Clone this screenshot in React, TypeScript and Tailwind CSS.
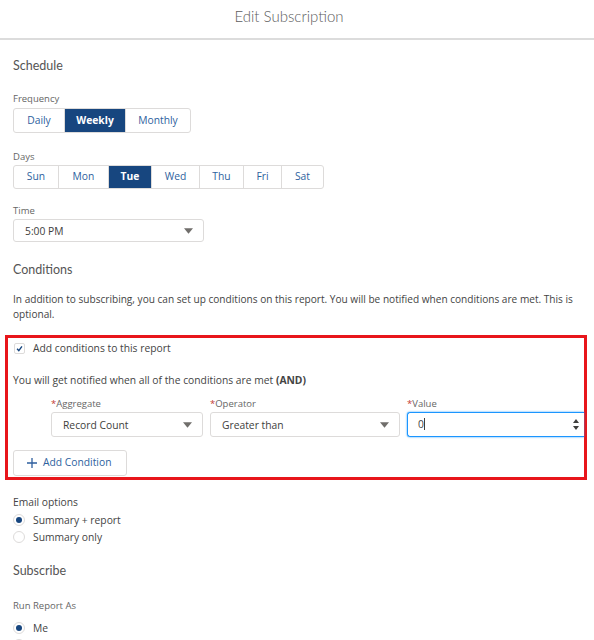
import { useState } from "react";

const frequencies = ["Daily", "Weekly", "Monthly"];
const freqWidths = ["w-[50px]", "w-[61px]", "w-[65px]"];
const days = ["Sun", "Mon", "Tue", "Wed", "Thu", "Fri", "Sat"];
const dayWidths = ["w-[44px]", "w-[50px]", "w-[43px]", "w-[48px]", "w-[44px]", "w-[38px]", "w-[42px]"];

function Caret() {
  return (
    <svg className="h-[6px] w-[9px] text-[#706e6b]" viewBox="0 0 10 6" fill="currentColor">
      <path d="M0 0h10L5 6z" />
    </svg>
  );
}

function Select({ value, className }: { value: string; className: string }) {
  return (
    <div
      className={`flex items-center justify-between rounded-[3px] border border-[#dddbda] bg-white pl-[11px] pr-[10px] text-[10.3px] leading-[14px] text-[#3e3e3c] ${className}`}
    >
      <span>{value}</span>
      <Caret />
    </div>
  );
}

function Radio({ checked, label }: { checked: boolean; label: string }) {
  return (
    <div className="flex h-[17px] items-center gap-[8px]">
      <span className="flex h-[12px] w-[12px] items-center justify-center rounded-full border border-[#dddbda] bg-white">
        {checked && <span className="h-[6px] w-[6px] rounded-full bg-[#17467f]" />}
      </span>
      <span className="text-[10.3px] leading-[14px] text-[#444]">{label}</span>
    </div>
  );
}

function Label({ text, required }: { text: string; required?: boolean }) {
  return (
    <div className="text-[9.5px] leading-[13px] text-[#666]">
      {required && <span className="text-[#c23934]">*</span>}
      {text}
    </div>
  );
}

function Heading({ text, className }: { text: string; className: string }) {
  return (
    <h2 className={`font-['Lato',sans-serif] text-[12.5px] leading-[16px] font-normal text-[#555] ${className}`}>{text}</h2>
  );
}

export default function App() {
  const [freq, setFreq] = useState("Weekly");
  const [day, setDay] = useState("Tue");

  return (
    <div className="h-[640px] w-[594px] overflow-hidden bg-white font-['Open_Sans',sans-serif] text-[#444]">
      {/* Modal header */}
      <header className="flex h-[40px] items-start justify-center border-b-2 border-[#dcdcdc] pt-[6px]">
        <h1 className="mr-[16px] font-['Lato',sans-serif] text-[15px] leading-[20px] font-light text-[#5d5d5d]">Edit Subscription</h1>
      </header>

      <div className="px-[13px]">
        <Heading text="Schedule" className="mt-[18px]" />

        <div className="mt-[18px]">
          <Label text="Frequency" />
        </div>
        <div className="mt-[3px] flex h-[25px] w-fit rounded-[3px] border border-[#dddbda]">
          {frequencies.map((f, i) => (
            <button
              key={f}
              onClick={() => setFreq(f)}
              className={`flex h-full items-center justify-center text-[10.3px] ${freqWidths[i]} ${i > 0 ? "border-l border-[#dddbda]" : ""} ${
                freq === f ? "bg-[#17467f] font-bold text-white" : "text-[#2e5f9e]"
              }`}
            >
              {f}
            </button>
          ))}
        </div>

        <div className="mt-[17px]">
          <Label text="Days" />
        </div>
        <div className="mt-[2px] flex h-[24px] w-fit rounded-[3px] border border-[#dddbda]">
          {days.map((d, i) => (
            <button
              key={d}
              onClick={() => setDay(d)}
              className={`flex h-full items-center justify-center text-[10.3px] ${dayWidths[i]} ${i > 0 ? "border-l border-[#dddbda]" : ""} ${
                day === d ? "bg-[#17467f] font-bold text-white" : "text-[#2e5f9e]"
              }`}
            >
              {d}
            </button>
          ))}
        </div>

        <div className="mt-[15px]">
          <Label text="Time" />
        </div>
        <Select value="5:00 PM" className="mt-[2px] h-[23px] w-[191px]" />

        <Heading text="Conditions" className="mt-[20px]" />
        <p className="mt-[14px] text-[10.1px] leading-[15px] text-[#444]">
          In addition to subscribing, you can set up conditions on this report. You will be notified when conditions are met. This is optional.
        </p>
      </div>

      {/* Highlighted conditions block */}
      <div className="ml-[5px] mt-[13px] h-[145px] w-[582px] border-[3px] border-[#e8161b] pl-[5px]">
        <div className="mt-[3px] flex items-center gap-[8px] pl-[1px]">
          <span className="flex h-[11px] w-[11px] items-center justify-center rounded-[2px] border border-[#dddbda] bg-white">
            <svg className="h-[7px] w-[7px] text-[#17467f]" viewBox="0 0 10 10" fill="none" stroke="currentColor" strokeWidth="2">
              <path d="M1.5 5.5l2.5 2.5 4.5-6" />
            </svg>
          </span>
          <span className="text-[10.3px] leading-[14px] text-[#444]">Add conditions to this report</span>
        </div>

        <p className="mt-[18px] text-[10.3px] leading-[14px] text-[#444]">
          You will get notified when all of the conditions are met <span className="font-bold">(AND)</span>
        </p>

        <div className="mt-[10px] flex gap-[7px] pl-[38px]">
          <div className="w-[152px]">
            <Label text="Aggregate" required />
            <Select value="Record Count" className="mt-[2px] h-[25px]" />
          </div>
          <div className="w-[190px]">
            <Label text="Operator" required />
            <Select value="Greater than" className="mt-[2px] h-[25px]" />
          </div>
          <div className="flex-1">
            <Label text="Value" required />
            <div className="mt-[2px] flex h-[25px] items-center justify-between rounded-l-[3px] border border-r-0 border-[#1b96ff] pl-[10px] pr-[5px] text-[10.3px] shadow-[0_0_2px_#1b96ff]">
              <span>
                0<span className="inline-block h-[12px] w-px translate-y-[2px] bg-[#3e3e3c]" />
              </span>
              <span className="flex flex-col items-center gap-[3px] text-[#3e3e3c]">
                <svg className="h-[4px] w-[6px]" viewBox="0 0 6 4" fill="currentColor">
                  <path d="M3 0l3 4H0z" />
                </svg>
                <svg className="h-[4px] w-[6px]" viewBox="0 0 6 4" fill="currentColor">
                  <path d="M0 0h6L3 4z" />
                </svg>
              </span>
            </div>
          </div>
        </div>

        <button className="mt-[13px] flex h-[26px] w-[114px] items-center gap-[6px] rounded-[3px] border border-[#dddbda] bg-white pl-[13px] text-[10.3px] text-[#2e5f9e]">
          <svg className="h-[10px] w-[10px] text-[#2e5f9e]" viewBox="0 0 10 10" fill="none" stroke="currentColor" strokeWidth="1.3">
            <path d="M5 0v10M0 5h10" />
          </svg>
          Add Condition
        </button>
      </div>

      <div className="px-[13px]">
        <div className="mt-[15px] text-[10.3px] leading-[14px] text-[#444]">Email options</div>
        <div className="mt-[2px]">
          <Radio checked label="Summary + report" />
          <Radio checked={false} label="Summary only" />
        </div>

        <Heading text="Subscribe" className="mt-[18px]" />

        <div className="mt-[20px]">
          <Label text="Run Report As" />
        </div>
        <div className="mt-[7px]">
          <Radio checked label="Me" />
          <Radio checked={false} label="Another Person" />
        </div>
      </div>
    </div>
  );
}
